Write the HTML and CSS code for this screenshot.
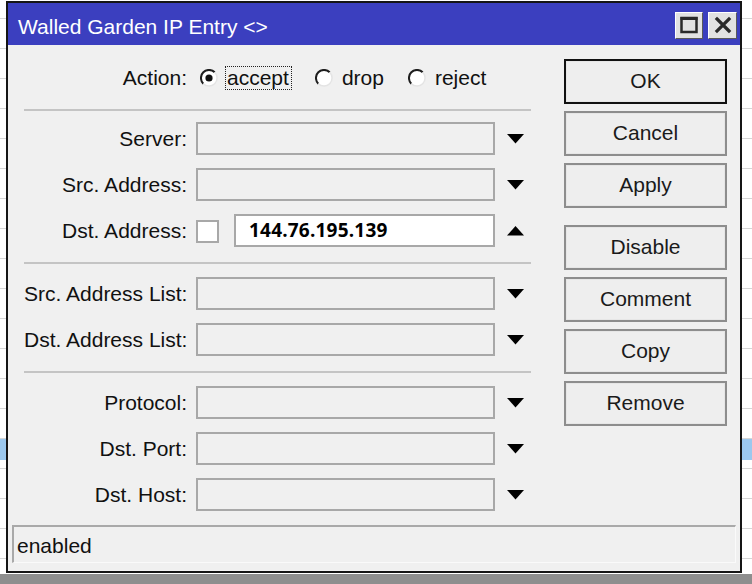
FILE: index.html
```html
<!DOCTYPE html>
<html lang="en">
<head>
<meta charset="utf-8">
<title>Walled Garden IP Entry</title>
<link rel="stylesheet" href="styles.css">
</head>
<body>
<div class="window">
  <div class="titlebar">
    <span class="title">Walled Garden IP Entry &lt;&gt;</span>
    <div class="tb-buttons">
      <span class="tb-btn">
        <svg width="20" height="20" viewBox="0 0 20 20"><rect x="2.5" y="3" width="15" height="14" fill="none" stroke="#2a2a2a" stroke-width="2.5"/><rect x="1.5" y="2" width="17" height="3" fill="#2a2a2a"/></svg>
      </span>
      <span class="tb-btn">
        <svg width="20" height="20" viewBox="0 0 20 20"><path d="M4 4 L16 16 M16 4 L4 16" stroke="#2a2a2a" stroke-width="3.2" stroke-linecap="square"/></svg>
      </span>
    </div>
  </div>

  <div class="content">
    <div class="main">
      <div class="form">
        <div class="action-row">
          <span class="label">Action:</span>
          <span class="radio">
            <svg class="radio-mark" width="18" height="18" viewBox="0 0 18 18"><circle cx="9" cy="9" r="8" fill="#fff"/><path d="M3.3 14.7 A8 8 0 0 1 14.7 3.3" fill="none" stroke="#1e1e1e" stroke-width="2"/><path d="M14.7 3.3 A8 8 0 0 1 3.3 14.7" fill="none" stroke="#e4e4e4" stroke-width="1.5"/><circle cx="9" cy="9" r="3.6" fill="#111"/></svg>
            <span class="radio-text focus">accept</span>
          </span>
          <span class="radio">
            <svg class="radio-mark" width="18" height="18" viewBox="0 0 18 18"><circle cx="9" cy="9" r="8" fill="#fff"/><path d="M3.3 14.7 A8 8 0 0 1 14.7 3.3" fill="none" stroke="#1e1e1e" stroke-width="2"/><path d="M14.7 3.3 A8 8 0 0 1 3.3 14.7" fill="none" stroke="#e4e4e4" stroke-width="1.5"/></svg>
            <span class="radio-text">drop</span>
          </span>
          <span class="radio">
            <svg class="radio-mark" width="18" height="18" viewBox="0 0 18 18"><circle cx="9" cy="9" r="8" fill="#fff"/><path d="M3.3 14.7 A8 8 0 0 1 14.7 3.3" fill="none" stroke="#1e1e1e" stroke-width="2"/><path d="M14.7 3.3 A8 8 0 0 1 3.3 14.7" fill="none" stroke="#e4e4e4" stroke-width="1.5"/></svg>
            <span class="radio-text">reject</span>
          </span>
        </div>

        <div class="sep"></div>

        <div class="section">
          <div class="row">
            <span class="label">Server:</span>
            <span class="field"></span>
            <span class="arrow"><svg width="17" height="10" viewBox="0 0 17 10"><polygon points="0,0 17,0 8.5,9.5" fill="#000"/></svg></span>
          </div>
          <div class="row">
            <span class="label">Src. Address:</span>
            <span class="field"></span>
            <span class="arrow"><svg width="17" height="10" viewBox="0 0 17 10"><polygon points="0,0 17,0 8.5,9.5" fill="#000"/></svg></span>
          </div>
          <div class="row">
            <span class="label">Dst. Address:</span>
            <span class="check"></span>
            <span class="field field-white short">144.76.195.139</span>
            <span class="arrow"><svg width="17" height="10" viewBox="0 0 17 10"><polygon points="0,9.5 17,9.5 8.5,0" fill="#000"/></svg></span>
          </div>
        </div>

        <div class="sep"></div>

        <div class="section">
          <div class="row">
            <span class="label">Src. Address List:</span>
            <span class="field"></span>
            <span class="arrow"><svg width="17" height="10" viewBox="0 0 17 10"><polygon points="0,0 17,0 8.5,9.5" fill="#000"/></svg></span>
          </div>
          <div class="row">
            <span class="label">Dst. Address List:</span>
            <span class="field"></span>
            <span class="arrow"><svg width="17" height="10" viewBox="0 0 17 10"><polygon points="0,0 17,0 8.5,9.5" fill="#000"/></svg></span>
          </div>
        </div>

        <div class="sep"></div>

        <div class="section">
          <div class="row">
            <span class="label">Protocol:</span>
            <span class="field"></span>
            <span class="arrow"><svg width="17" height="10" viewBox="0 0 17 10"><polygon points="0,0 17,0 8.5,9.5" fill="#000"/></svg></span>
          </div>
          <div class="row">
            <span class="label">Dst. Port:</span>
            <span class="field"></span>
            <span class="arrow"><svg width="17" height="10" viewBox="0 0 17 10"><polygon points="0,0 17,0 8.5,9.5" fill="#000"/></svg></span>
          </div>
          <div class="row">
            <span class="label">Dst. Host:</span>
            <span class="field"></span>
            <span class="arrow"><svg width="17" height="10" viewBox="0 0 17 10"><polygon points="0,0 17,0 8.5,9.5" fill="#000"/></svg></span>
          </div>
        </div>
      </div>

      <div class="buttons">
        <div class="btn-group">
          <span class="btn btn-default">OK</span>
          <span class="btn">Cancel</span>
          <span class="btn">Apply</span>
        </div>
        <div class="btn-group">
          <span class="btn">Disable</span>
          <span class="btn">Comment</span>
          <span class="btn">Copy</span>
          <span class="btn">Remove</span>
        </div>
      </div>
    </div>

    <div class="status">enabled</div>
  </div>
</div>
</body>
</html>
```

FILE: styles.css
```css
html, body {
  margin: 0;
  padding: 0;
}

/* desktop behind the dialog: a list grid with a selected row and a grey strip */
body {
  width: 752px;
  height: 584px;
  overflow: hidden;
  font-family: "Liberation Sans", Arial, sans-serif;
  color: #111;
  background:
    linear-gradient(#8e8e8e, #8e8e8e) 0 574px / 100% 10px no-repeat,
    linear-gradient(#9cc8ee, #9cc8ee) 0 439px / 100% 21px no-repeat,
    repeating-linear-gradient(to bottom, #fff 0 18px, #d6d6d6 18px 19px, #fff 19px 30px);
}

.window {
  box-sizing: border-box;
  width: 736px;
  height: 572px;
  margin: 1px 0 0 6px;
  border: 2px solid #151515;
  background: #f0f0f0;
  display: flex;
  flex-direction: column;
}

/* title bar */
.titlebar {
  height: 42px;
  flex: none;
  background: #3b3fbf;
  display: flex;
  align-items: center;
  justify-content: space-between;
  padding: 0 3px 0 10px;
}

.title {
  color: #fff;
  font-size: 21px;
  line-height: 42px;
  padding-top: 6px;
}

.tb-buttons {
  display: flex;
  gap: 5px;
  padding-top: 2px;
}

.tb-btn {
  box-sizing: border-box;
  width: 28px;
  height: 27px;
  background: #e2e2e2;
  border: 1px solid;
  border-color: #fff #5a5a5a #5a5a5a #fff;
  display: flex;
  align-items: center;
  justify-content: center;
}

.tb-btn + .tb-btn {
  width: 29px;
}

/* dialog body */
.content {
  flex: 1;
  display: flex;
  flex-direction: column;
  padding: 0 4px 8px 4px;
}

.main {
  display: flex;
  flex: 1;
}

.form {
  width: 507px;
  margin-left: 12px;
  padding-top: 21px;
}

.label {
  width: 163px;
  margin-right: 9px;
  flex: none;
  text-align: right;
  font-size: 21px;
  white-space: nowrap;
}

.action-row {
  display: flex;
  align-items: center;
  height: 24px;
}

.action-row .label {
  line-height: 24px;
}

.radio {
  display: flex;
  align-items: center;
  margin-left: 4px;
  margin-right: 20px;
}

.radio-mark {
  flex: none;
  margin-right: 9px;
}

.radio-text {
  font-size: 21px;
  line-height: 22px;
}

.radio-text.focus {
  outline: 1px dotted #222;
  outline-offset: 0;
  padding: 0 2px 0 1px;
  margin-left: -1px;
}

.sep {
  height: 0;
  border-top: 2px solid #c4c4c4;
  margin: 19px 0 11px 0;
}

.section + .sep {
  margin: 15px 0 13px 0;
}

.section {
  display: flex;
  flex-direction: column;
  gap: 13px;
}

.row {
  display: flex;
  align-items: center;
  height: 33px;
}

.row .label {
  line-height: 33px;
}

.field {
  box-sizing: border-box;
  width: 299px;
  height: 33px;
  flex: none;
  border: 2px solid #a8a8a8;
  background: #f0f0f0;
}

.field-white {
  background: #fff;
  font-family: "Open Sans", "Noto Sans", sans-serif;
  font-weight: 700;
  font-size: 19px;
  line-height: 29px;
  color: #000;
  padding-left: 13px;
  letter-spacing: 0.2px;
}

.field.short {
  width: 261px;
}

.check {
  box-sizing: border-box;
  width: 23px;
  height: 23px;
  margin: 2px 15px 0 0;
  border: 2px solid #a8a8a8;
  background: #fff;
  flex: none;
}

.arrow {
  width: 36px;
  flex: none;
  display: flex;
  padding-left: 12px;
  box-sizing: border-box;
}

/* command buttons */
.buttons {
  width: 163px;
  margin-left: 33px;
  padding-top: 14px;
  display: flex;
  flex-direction: column;
  gap: 17px;
}

.btn-group {
  display: flex;
  flex-direction: column;
  gap: 7px;
}

.btn {
  box-sizing: border-box;
  height: 45px;
  border: 2px solid #8d8d8d;
  box-shadow: inset 0 0 0 1px #e6e6e6;
  background: #eeeeee;
  font-size: 21px;
  line-height: 40px;
  text-align: center;
  color: #1a1a1a;
}

.btn-default {
  border-color: #111;
}

/* status strip */
.status {
  box-sizing: border-box;
  height: 38px;
  border-top: 2px solid #a9a9a9;
  border-left: 2px solid #a9a9a9;
  border-right: 1px solid #fafafa;
  border-bottom: 1px solid #fafafa;
  padding-left: 3px;
  font-size: 21px;
  line-height: 38px;
}
```
